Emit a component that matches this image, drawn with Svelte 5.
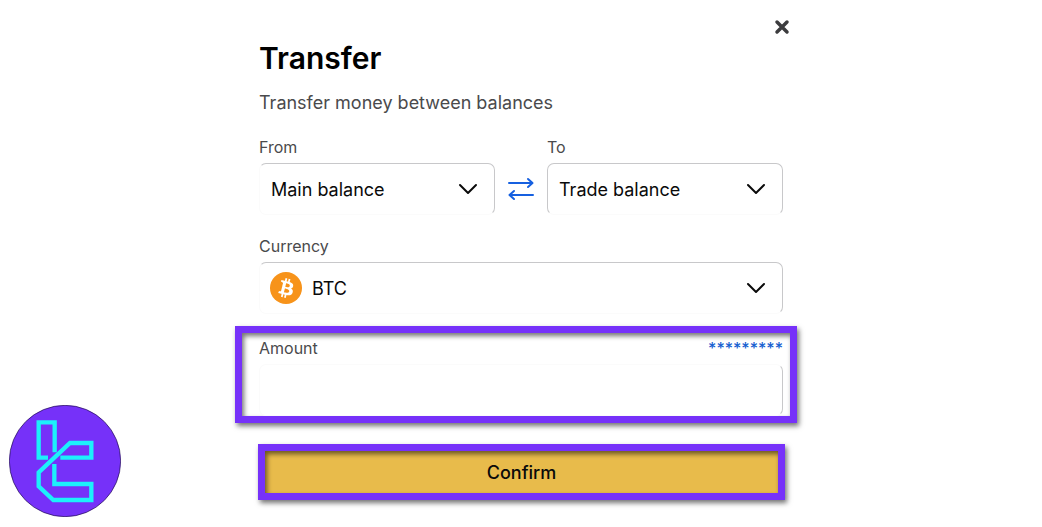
<script>
    const balances = ['Main balance', 'Trade balance']
    let from = $state('Main balance')
    let to = $state('Trade balance')
    let currency = $state('BTC')
    let amount = $state('')

    function swap(){
        [from, to] = [to, from]
    }
</script>

{#snippet chevron()}
    <svg class="chevron" viewBox="0 0 20 12" width="20" height="12" aria-hidden="true">
        <path d="M2 2L10 10L18 2" />
    </svg>
{/snippet}

<main class="dialog">
    <div class="top">
        <button class="close" type="button" aria-label="Close">
            <svg viewBox="0 0 16 16" width="16" height="16"><path d="M3 3L13 13M13 3L3 13" /></svg>
        </button>
    </div>
    <h1>Transfer</h1>
    <p>Transfer money between balances</p>

    <form>
        <div class="accounts">
            <div class="field">
                <label for="from">From</label>
                <div class="select">
                    <select id="from" bind:value={from}>
                        {#each balances as item}<option>{item}</option>{/each}
                    </select>
                    {@render chevron()}
                </div>
            </div>
            <button class="swap" type="button" aria-label="Swap balances" onclick={swap}>
                <svg viewBox="0 0 26 24" width="26" height="24">
                    <path d="M1 6H24M20 2L24.500 6L20 10M25 18H2M6 14L1.500 18L6 22" />
                </svg>
            </button>
            <div class="field">
                <label for="to">To</label>
                <div class="select">
                    <select id="to" bind:value={to}>
                        {#each balances as item}<option>{item}</option>{/each}
                    </select>
                    {@render chevron()}
                </div>
            </div>
        </div>

        <div class="field">
            <label for="currency">Currency</label>
            <div class="select coin">
                <select id="currency" bind:value={currency}>
                    <option>BTC</option>
                </select>
                <svg class="btc" viewBox="0 0 32 32" width="32" height="32" aria-hidden="true">
                    <circle cx="16" cy="16" r="16" fill="#f7931a" />
                    <path fill="#fff" d="M23.189 14.020c.314-2.096-1.283-3.223-3.465-3.975l.708-2.840-1.728-.43-.69 2.765c-.454-.114-.92-.22-1.385-.326l.695-2.783L15.596 6l-.708 2.839c-.376-.086-.746-.17-1.104-.26l.002-.009-2.384-.595-.46 1.846s1.283.294 1.256.312c.7.175.826.638.805 1.006l-.806 3.235c.048.012.11.030.18.057l-.183-.045-1.130 4.532c-.086.212-.303.531-.793.410.018.025-1.256-.313-1.256-.313l-.858 1.978 2.250.561c.418.105.828.215 1.231.318l-.715 2.872 1.727.43.708-2.840c.472.127.930.245 1.378.357l-.706 2.828 1.728.43.715-2.866c2.948.558 5.164.333 6.097-2.333.752-2.146-.037-3.385-1.588-4.192 1.130-.260 1.980-1.003 2.207-2.538zm-3.950 5.538c-.533 2.147-4.148.986-5.320.695l.950-3.805c1.172.293 4.929.872 4.370 3.110zm.535-5.569c-.487 1.953-3.495.960-4.470.717l.860-3.450c.975.243 4.118.696 3.610 2.733z" />
                </svg>
                {@render chevron()}
            </div>
        </div>

        <div class="field highlight amount">
            <div class="caption">
                <label for="amount">Amount</label>
                <a href="#max">*********</a>
            </div>
            <input id="amount" type="text" inputmode="decimal" bind:value={amount} />
        </div>

        <button class="highlight confirm" type="submit">Confirm</button>
    </form>
</main>

<svg class="logo" viewBox="27 24 336 336" width="112" height="112" role="img" aria-label="Logo">
    <circle cx="195" cy="192" r="167" fill="#7631f9" stroke="#1c0b4a" stroke-width="2" />
    <path d="M144 182H116V76H164V166" />
    <path d="M181 182H274V138H210L116 226V268L160 309H274V261H163V201" />
</svg>

<style>
:global(body){
    background: #fff;
}
.dialog{
    max-width: 524px;
    margin: 0 auto;
    padding: 19px 24px;
    font-family: Inter, sans-serif;
    font-size: 18px;
    color: #0a0a0a;
}
.top{
    display: flex;
    justify-content: flex-end;
    margin-right: -7px;
}
button{
    padding: 0;
    border: 0;
    background: none;
    font: inherit;
    color: inherit;
    cursor: pointer;
}
svg{
    display: block;
    fill: none;
}
.close path{
    stroke: #3c3c3e;
    stroke-width: 3.5;
    stroke-linecap: round;
}
h1{
    margin: 3px 0 13px;
    font-size: 30px;
    line-height: 40px;
    font-weight: 600;
    color: #000;
}
p{
    margin: 0 0 22px;
    line-height: 24px;
    color: #4a4a4c;
}
form{
    display: flex;
    flex-direction: column;
}
.accounts{
    display: grid;
    grid-template-columns: 1fr 52px 1fr;
    margin-bottom: 21px;
}
.field{
    display: flex;
    flex-direction: column;
    gap: 6px;
    min-width: 0;
}
label{
    font-size: 16px;
    line-height: 20px;
    color: #4a4a4c;
}
.select{
    display: grid;
    align-items: center;
}
.select > *{
    grid-area: 1 / 1;
}
select, input{
    box-sizing: border-box;
    width: 100%;
    height: 52px;
    padding: 0 44px 0 11px;
    border: 1px solid #c8c8ca;
    border-bottom-color: #fbfbfb;
    border-radius: 7px;
    background: #fff;
    font: inherit;
    color: inherit;
    appearance: none;
}
#from, #currency{
    border-left-color: #fbfbfb;
}
.chevron{
    justify-self: end;
    margin-right: 17px;
    pointer-events: none;
}
.chevron path{
    stroke: #0a0a0a;
    stroke-width: 2;
    stroke-linecap: round;
    stroke-linejoin: round;
}
.swap{
    align-self: end;
    justify-self: center;
    height: 52px;
}
.swap path{
    stroke: #1660e0;
    stroke-width: 2;
    stroke-linecap: round;
    stroke-linejoin: round;
}
.btc{
    margin-left: 11px;
    pointer-events: none;
}
.coin select{
    padding-left: 52px;
}
.highlight{
    border: 7px solid #7631f9;
    box-shadow: 2px 3px 5px rgba(0, 0, 0, .55), inset 2px 3px 5px rgba(0, 0, 0, .55);
}
.amount{
    margin: 12px -14px 21px -24px;
    padding: 5px 7px 0 17px;
}
.caption{
    display: flex;
    justify-content: space-between;
}
a{
    font-size: 16px;
    line-height: 20px;
    font-weight: 500;
    color: #1660d0;
    text-decoration: none;
}
.amount input{
    padding: 0 11px;
    border-color: #fbfbfb #c8c8ca #fbfbfb #fbfbfb;
}
.confirm{
    height: 56px;
    margin: 0 -2px 0 -1px;
    background: #e8bb4b;
    font-weight: 500;
}
.logo{
    position: fixed;
    left: 9px;
    bottom: 10px;
}
.logo path{
    stroke: #1cf0fb;
    stroke-width: 13;
}
</style>
